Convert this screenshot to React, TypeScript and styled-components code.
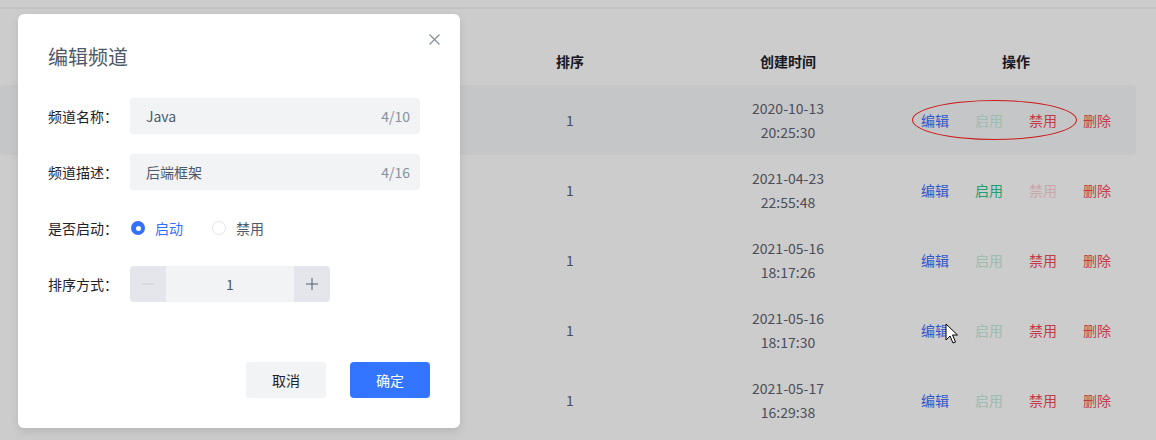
import React from "react";
import styled, { createGlobalStyle } from "styled-components";

const GlobalStyle = createGlobalStyle`
  html, body { margin: 0; padding: 0; background: #ffffff; }
  body {
    font-family: "Noto Sans CJK SC", "Noto Sans", sans-serif;
    font-size: 14px;
    color: #1d2129;
  }
  * { box-sizing: border-box; }
`;

const Page = styled.div`
  position: relative;
  width: 1156px;
  height: 440px;
  overflow: hidden;
  background: #ffffff;
`;

const TopBar = styled.div`
  height: 9px;
  border-bottom: 2px solid #f2f3f5;
  background: #ffffff;
`;

const Table = styled.div`
  width: 1136px;
  padding-top: 28px;
`;

const Row = styled.div<{ $header?: boolean; $hover?: boolean }>`
  position: relative;
  display: grid;
  grid-template-columns: 460px 220px 216px 240px;
  align-items: center;
  height: ${(p) => (p.$header ? "48px" : "70px")};
  background: ${(p) => (p.$hover ? "#f7f8fa" : "transparent")};
  border-radius: 4px;
`;

const Spacer = styled.div``;

const HeadCell = styled.div`
  text-align: center;
  font-weight: 700;
  color: #1d2129;
  font-size: 14px;
`;

const Cell = styled.div`
  text-align: center;
  color: #5c6273;
  font-size: 14px;
  line-height: 24px;
`;

const Actions = styled.div`
  display: flex;
  justify-content: center;
  gap: 26px;
`;

type Tone = "edit" | "on" | "onOff" | "off" | "offOff" | "del";
const toneColor: Record<Tone, string> = {
  edit: "#3d6dff",
  on: "#27c98b",
  onOff: "#c6ebdc",
  off: "#f54a5a",
  offOff: "#fdd0d6",
  del: "#f54a5a",
};

const ActionLink = styled.span<{ $tone: Tone }>`
  font-size: 14px;
  line-height: 20px;
  color: ${(p) => toneColor[p.$tone]};
  cursor: pointer;
`;

const Annotation = styled.div`
  position: absolute;
  left: 912px;
  top: 15px;
  width: 165px;
  height: 40px;
  border: 1.5px solid #ff2020;
  border-radius: 50%;
  pointer-events: none;
`;

const Mask = styled.div`
  position: absolute;
  inset: 0;
  background: rgba(0, 0, 0, 0.2);
`;

const Modal = styled.div`
  position: absolute;
  left: 18px;
  top: 14px;
  width: 442px;
  height: 414px;
  background: #ffffff;
  border-radius: 6px;
  box-shadow: 0 4px 10px rgba(0, 0, 0, 0.1);
  padding: 29px 30px 30px 30px;
  display: flex;
  flex-direction: column;
`;

const CloseBtn = styled.button`
  position: absolute;
  right: 20px;
  top: 19px;
  width: 12px;
  height: 12px;
  padding: 0;
  border: none;
  background: transparent;
  display: flex;
  align-items: center;
  justify-content: center;
  cursor: pointer;
`;

const Title = styled.div`
  font-size: 20px;
  line-height: 28px;
  color: #4e5969;
`;

const Form = styled.div`
  margin-top: 27px;
  width: 372px;
  display: flex;
  flex-direction: column;
  gap: 20px;
`;

const FormRow = styled.div`
  display: grid;
  grid-template-columns: 82px 1fr;
  align-items: center;
  height: 36px;
`;

const Label = styled.label`
  font-size: 14px;
  color: #1d2129;
`;

const InputBox = styled.div`
  height: 36px;
  background: #f2f3f5;
  border-radius: 4px;
  display: flex;
  align-items: center;
  padding: 0 10px 0 16px;
`;

const InputText = styled.span`
  flex: 1;
  color: #4e5969;
  font-size: 14px;
`;

const Counter = styled.span`
  color: #86909c;
  font-size: 14px;
`;

const RadioGroup = styled.div`
  display: flex;
  align-items: center;
  gap: 28px;
`;

const RadioItem = styled.div<{ $checked?: boolean }>`
  display: flex;
  align-items: center;
  gap: 10px;
  padding-left: 1px;
  color: ${(p) => (p.$checked ? "#3370ff" : "#4e5969")};
  font-size: 14px;
`;

const RadioDot = styled.span<{ $checked?: boolean }>`
  width: 14px;
  height: 14px;
  border-radius: 50%;
  background: ${(p) => (p.$checked ? "#3370ff" : "#ffffff")};
  border: ${(p) => (p.$checked ? "none" : "1px solid #e5e6eb")};
  display: flex;
  align-items: center;
  justify-content: center;
  &::after {
    content: "";
    display: ${(p) => (p.$checked ? "block" : "none")};
    width: 5px;
    height: 5px;
    border-radius: 50%;
    background: #ffffff;
  }
`;

const Stepper = styled.div`
  width: 200px;
  height: 36px;
  display: grid;
  grid-template-columns: 36px 1fr 36px;
  border-radius: 4px;
  overflow: hidden;
  background: #f2f3f5;
`;

const StepBtn = styled.button`
  border: none;
  padding: 0;
  background: #e5e6eb;
  display: flex;
  align-items: center;
  justify-content: center;
`;

const StepValue = styled.div`
  display: flex;
  align-items: center;
  justify-content: center;
  color: #4e5969;
  font-size: 14px;
`;

const Footer = styled.div`
  margin-top: auto;
  display: flex;
  justify-content: flex-end;
  gap: 24px;
`;

const Button = styled.button<{ $primary?: boolean }>`
  width: 80px;
  height: 36px;
  border: none;
  border-radius: 4px;
  font-family: inherit;
  font-size: 14px;
  background: ${(p) => (p.$primary ? "#3375ff" : "#f2f3f5")};
  color: ${(p) => (p.$primary ? "#ffffff" : "#1d2129")};
  cursor: pointer;
`;

const Cursor = styled.svg`
  position: absolute;
  left: 945px;
  top: 323px;
`;

const rows = [
  { date: "2020-10-13", time: "20:25:30", enabled: true },
  { date: "2021-04-23", time: "22:55:48", enabled: false },
  { date: "2021-05-16", time: "18:17:26", enabled: true },
  { date: "2021-05-16", time: "18:17:30", enabled: true },
  { date: "2021-05-17", time: "16:29:38", enabled: true },
];

export default function App() {
  return (
    <Page>
      <GlobalStyle />
      <TopBar />
      <Table>
        <Row $header>
          <Spacer />
          <HeadCell>排序</HeadCell>
          <HeadCell>创建时间</HeadCell>
          <HeadCell>操作</HeadCell>
        </Row>
        {rows.map((r, i) => (
          <Row key={i} $hover={i === 0}>
            <Spacer />
            <Cell>1</Cell>
            <Cell>
              {r.date}
              <br />
              {r.time}
            </Cell>
            <Actions>
              <ActionLink $tone="edit">编辑</ActionLink>
              <ActionLink $tone={r.enabled ? "onOff" : "on"}>启用</ActionLink>
              <ActionLink $tone={r.enabled ? "off" : "offOff"}>禁用</ActionLink>
              <ActionLink $tone="del">删除</ActionLink>
            </Actions>
            {i === 0 && <Annotation />}
          </Row>
        ))}
      </Table>
      <Mask />
      <Modal>
        <CloseBtn aria-label="关闭">
          <svg width="11" height="11" viewBox="0 0 11 11">
            <path d="M0.5 0.5 L10.5 10.5 M10.5 0.5 L0.5 10.5" stroke="#86909c" strokeWidth="1.2" fill="none" />
          </svg>
        </CloseBtn>
        <Title>编辑频道</Title>
        <Form>
          <FormRow>
            <Label>频道名称：</Label>
            <InputBox>
              <InputText>Java</InputText>
              <Counter>4/10</Counter>
            </InputBox>
          </FormRow>
          <FormRow>
            <Label>频道描述：</Label>
            <InputBox>
              <InputText>后端框架</InputText>
              <Counter>4/16</Counter>
            </InputBox>
          </FormRow>
          <FormRow>
            <Label>是否启动：</Label>
            <RadioGroup>
              <RadioItem $checked>
                <RadioDot $checked />
                启动
              </RadioItem>
              <RadioItem>
                <RadioDot />
                禁用
              </RadioItem>
            </RadioGroup>
          </FormRow>
          <FormRow>
            <Label>排序方式：</Label>
            <Stepper>
              <StepBtn aria-label="减少">
                <svg width="12" height="12" viewBox="0 0 12 12">
                  <path d="M0 6 H12" stroke="#c9cdd4" strokeWidth="1" />
                </svg>
              </StepBtn>
              <StepValue>1</StepValue>
              <StepBtn aria-label="增加">
                <svg width="12" height="12" viewBox="0 0 12 12">
                  <path d="M0 6 H12 M6 0 V12" stroke="#4e5969" strokeWidth="1" />
                </svg>
              </StepBtn>
            </Stepper>
          </FormRow>
        </Form>
        <Footer>
          <Button>取消</Button>
          <Button $primary>确定</Button>
        </Footer>
      </Modal>
      <Cursor width="14" height="22" viewBox="0 0 14 22">
        <path d="M1 1 L1 17 L5 13 L8 20 L10.5 19 L7.5 12 L12.5 12 Z" fill="#ffffff" stroke="#000000" strokeWidth="1" strokeLinejoin="round" />
      </Cursor>
    </Page>
  );
}
